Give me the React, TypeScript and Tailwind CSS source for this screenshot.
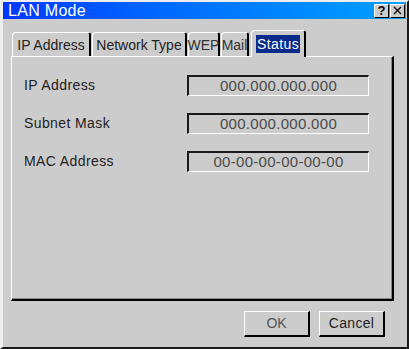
const tabs = [
  { t: "IP Address", w: "w-[79px]", f: "" },
  { t: "Network Type", w: "w-[95px]", f: "" },
  { t: "WEP", w: "w-[32px]", f: "font-['Liberation_Sans_Narrow',sans-serif] text-[#333]" },
  { t: "Mail", w: "w-[28px]", f: "font-['Liberation_Sans_Narrow',sans-serif] text-[#333]" },
];

const rows = [
  { label: "IP Address", value: "000.000.000.000" },
  { label: "Subnet Mask", value: "000.000.000.000" },
  { label: "MAC Address", value: "00-00-00-00-00-00" },
];

const App = () => {
  return (
    <div className="w-[409px] h-[349px] bg-[#cccccc] border-l-[3px] border-t-2 border-r-2 border-b-2 border-l-[#eeeeee] border-t-[#eeeeee] border-r-[#1a1a1a] border-b-[#1a1a1a] flex flex-col font-['Liberation_Sans',sans-serif] text-[#222]">
      {/* title bar */}
      <div className="h-[17px] mr-[1px] bg-gradient-to-r from-[#0036ff] to-[#0aa0ff] flex items-center justify-between pl-[5px] pr-[1px]">
        <span className="text-white text-[16px] leading-none tracking-[0.3px]">LAN Mode</span>
        <div className="flex gap-[1px]">
          <div className="w-[15px] h-[14px] bg-[#cccccc] border border-t-white border-l-white border-r-black border-b-black flex items-center justify-center text-[13px] font-bold leading-none text-black">?</div>
          <div className="w-[15px] h-[14px] bg-[#cccccc] border border-t-white border-l-white border-r-black border-b-black flex items-center justify-center text-black">
            <svg width="9" height="9" viewBox="0 0 9 9"><path d="M1 1L8 8M8 1L1 8" stroke="black" strokeWidth="1.3" /></svg>
          </div>
        </div>
      </div>

      {/* tabs */}
      <div className="flex items-end gap-[1px] pl-[9px] mt-[11px] h-[26px]">
        {tabs.map((t) => (
          <div key={t.t} className={`${t.w} h-[24px] shrink-0 border-l border-t border-l-white border-t-white border-r-[2px] border-r-black rounded-tl-[4px] rounded-tr-[3px] flex items-center justify-center text-[14px] leading-none whitespace-nowrap`}>
            <span className={t.f}>{t.t}</span>
          </div>
        ))}
        <div className="w-[55px] h-[27px] -mb-[1px] ml-[1px] bg-[#cccccc] border-l border-t border-l-white border-t-white border-r-[2px] border-r-black rounded-tl-[4px] rounded-tr-[3px] flex items-center justify-center relative z-10">
          <span className="bg-[#0a2a8c] text-white text-[14px] leading-none px-[1px] py-[2px] tracking-[0.4px]">Status</span>
        </div>
      </div>

      {/* panel */}
      <div className="ml-[8px] mr-[13px] h-[245px] border-l border-t border-l-white border-t-white border-r-[2px] border-b-[2px] border-r-black border-b-black shadow-[inset_-1px_-1px_0_#888] flex flex-col gap-[17px] pt-[18px]">
        {rows.map((r) => (
          <div key={r.label} className="flex items-center h-[21px] pl-[12px]">
            <span className="w-[163px] text-[14px] tracking-[0.4px]">{r.label}</span>
            <div className="w-[182px] h-[21px] border-t-2 border-l-2 border-t-[#1a1a1a] border-l-[#1a1a1a] border-r border-b border-r-white border-b-white flex items-center justify-center text-[15px] text-[#4a4a4a] tracking-[0.3px]">
              {r.value}
            </div>
          </div>
        ))}
      </div>

      {/* buttons */}
      <div className="flex justify-end gap-[9px] mt-[10px] pr-[22px]">
        <button className="w-[66px] h-[26px] bg-[#cccccc] border-l border-t border-l-white border-t-white border-r-2 border-b-2 border-r-black border-b-black text-[14px] text-[#555] flex items-center justify-center">OK</button>
        <button className="w-[66px] h-[26px] bg-[#cccccc] border-l border-t border-l-white border-t-white border-r-2 border-b-2 border-r-black border-b-black text-[14px] flex items-center justify-center tracking-[0.3px]">Cancel</button>
      </div>
    </div>
  );
};

export default App;
